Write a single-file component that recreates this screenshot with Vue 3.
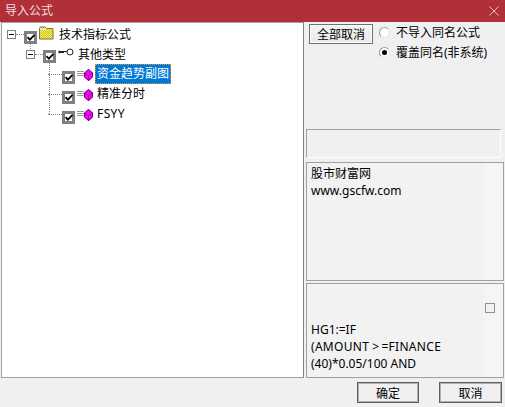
<script setup>
const rows = [
  { id: 'r1', level: 0, expand: true, icon: 'folder', label: '技术指标公式' },
  { id: 'r2', level: 1, expand: true, icon: 'key', label: '其他类型' },
  { id: 'r3', level: 2, icon: 'gem', label: '资金趋势副图', selected: true },
  { id: 'r4', level: 2, icon: 'gem', label: '精准分时' },
  { id: 'r5', level: 2, icon: 'gem', label: 'FSYY' }
]
</script>

<template>
  <div class="win">
    <header class="title">
      <span>导入公式</span>
      <svg class="close" width="10" height="10" viewBox="0 0 10 10"><path d="M.5.5l9 9M9.5.5l-9 9" stroke="#e8c4c6" stroke-width="1" fill="none"/></svg>
    </header>
    <main class="body">
      <section class="tree">
        <div v-for="r in rows" :key="r.id" class="row" :class="['lv' + r.level, r.id]">
          <span v-if="r.expand" class="exp"><i></i></span>
          <span v-if="r.expand" class="hdots"></span>
          <span v-else class="hdots long"></span>
          <span class="cb">
            <svg width="8" height="7" viewBox="0 0 8 7"><path d="M.5 3.200 2.900 5.700 7.500 .8" stroke="#000" stroke-width="1.700" fill="none"/></svg>
          </span>
          <svg v-if="r.icon === 'folder'" class="ic fold" width="16" height="14" viewBox="0 0 16 14">
            <defs>
              <pattern id="dith" width="2" height="2" patternUnits="userSpaceOnUse">
                <rect width="2" height="2" fill="#fff24a"/>
                <rect width="1" height="1" fill="#c9bd3c"/>
                <rect x="1" y="1" width="1" height="1" fill="#c9bd3c"/>
              </pattern>
            </defs>
            <path d="M1.500 13V2.500l1-1.500h4.500l1.500 1.500h6.500V13z" fill="url(#dith)" stroke="#77733f"/>
            <path d="M2 3h6" stroke="#fff" fill="none"/>
          </svg>
          <svg v-else-if="r.icon === 'key'" class="ic key" width="16" height="8" viewBox="0 0 16 8">
            <circle cx="12" cy="4" r="3" fill="#fff" stroke="#222"/>
            <path d="M9 3.500H1M1 4.500h5" stroke="#222" fill="none"/>
            <path d="M1 2.500v3" stroke="#222" fill="none"/>
          </svg>
          <template v-else>
            <svg class="ic lines" width="7" height="6" viewBox="0 0 7 6"><path d="M0 .5h7M0 2.500h7M0 4.500h7" stroke="#9a9a9a"/></svg>
            <svg class="ic gem" width="9" height="12" viewBox="0 0 9 12">
              <path d="M4.500 0 9 4v4l-4.500 4L0 8V4z" fill="#ff00ff"/>
              <path d="M0 4 4.500 6.500 9 4M4.500 6.500V12" stroke="#7a0a7a" stroke-width=".7" fill="none"/>
              <path d="M4.500 .4 8.600 4v4l-4.100 3.600L.4 8V4z" stroke="#300a40" stroke-width=".8" fill="none"/>
            </svg>
          </template>
          <span class="label" :class="{ sel: r.selected, latin: r.id === 'r5' }">{{ r.label }}</span>
        </div>
      </section>
      <aside class="side">
        <div class="opts">
          <button class="btn all">全部取消</button>
          <div class="radios">
            <label class="radio"><i></i>不导入同名公式</label>
            <label class="radio on"><i></i>覆盖同名(非系统)</label>
          </div>
        </div>
        <div class="group"></div>
        <div class="box one">
          <p>股市财富网</p>
          <p>www.gscfw.com</p>
        </div>
        <div class="box two">
          <span class="mini"></span>
          <p>HG1:=IF</p>
          <p class="wide">(AMOUNT<span class="op">&gt;</span>=FINANCE</p>
          <p>(40)*0.05/100 AND</p>
        </div>
      </aside>
    </main>
    <footer class="foot">
      <button class="btn act">确定</button>
      <button class="btn act">取消</button>
    </footer>
  </div>
</template>

<style>
html, body { margin: 0; background: #f0f0f0; }
</style>

<style scoped>
.win {
  width: 505px;
  height: 407px;
  display: flex;
  flex-direction: column;
  background: #f0f0f0;
  color: #000;
  font: 12px "Noto Sans", "Noto Sans CJK SC", sans-serif;
  overflow: hidden;
}
.title {
  height: 22px;
  flex: none;
  display: flex;
  align-items: center;
  justify-content: space-between;
  padding: 0 6px 2px 5px;
  box-sizing: border-box;
  background: #b12f36;
  color: #f3dfe0;
}
.close { margin-top: 2px; }
.body {
  flex: none;
  height: 356px;
  display: grid;
  grid-template-columns: 303px 1fr;
  padding-left: 1px;
}
.tree {
  position: relative;
  background: #fff;
  border: 1px solid #a0a0a0;
  border-right-color: #808080;
  padding-top: 1px;
  box-sizing: border-box;
}
.row {
  position: relative;
  height: 20px;
  display: flex;
  align-items: center;
}
.lv0 { padding-left: 5px; }
.lv1 { padding-left: 24px; }
.lv2 { padding-left: 46px; }
.exp {
  width: 9px;
  height: 9px;
  box-sizing: border-box;
  border: 1px solid #808080;
  background: #fff;
  display: flex;
  align-items: center;
  justify-content: center;
}
.exp i { width: 5px; height: 1px; background: #000; }
.hdots {
  width: 8px;
  height: 0;
  border-top: 1px dotted #808080;
}
.hdots.long { width: 14px; }
.cb {
  width: 13px;
  height: 13px;
  box-sizing: border-box;
  border: 3px solid #808080;
  background: #fff;
  display: flex;
  align-items: center;
  justify-content: center;
  transform: translateY(3px);
  flex: none;
}
.cb svg { flex: none; margin: 0 -1px; position: relative; }
.lv1 .cb { transform: translateY(2px); }
.ic { flex: none; }
.fold { margin-left: 1px; transform: translateY(-1px); }
.key { margin-left: 2px; transform: translateY(-2px); }
.lines { margin-left: 2px; }
.gem { transform: translateY(1px); }
.label { margin-left: 5px; white-space: nowrap; }
.lv1 .label { margin-left: 4px; }
.lv2 .label {
  margin-left: 2px;
  padding-left: 2px;
  line-height: 20px;
  height: 20px;
  box-sizing: border-box;
}
.lv2 .label.sel {
  background: #0078d7;
  color: #fff;
  outline: 1px dotted #e8902a;
  outline-offset: -1px;
  padding: 0 2px;
}
.latin { letter-spacing: .4px; }
.r2::before {
  content: "";
  position: absolute;
  left: 28px;
  top: -1px;
  height: 6px;
  border-left: 1px dotted #808080;
}
.r3::before, .r4::before, .r5::before {
  content: "";
  position: absolute;
  left: 47px;
  top: -1px;
  height: 11px;
  border-left: 1px dotted #808080;
}
.r3::after, .r4::after {
  content: "";
  position: absolute;
  left: 47px;
  top: 10px;
  height: 10px;
  border-left: 1px dotted #808080;
}
.side {
  display: flex;
  flex-direction: column;
  padding-left: 1px;
  min-width: 0;
}
.opts {
  height: 107px;
  flex: none;
  display: flex;
  gap: 6px;
  padding: 2px 0 0 4px;
  box-sizing: border-box;
}
.btn {
  font: inherit;
  color: #000;
  padding: 0;
  background: #f1f1f1;
  border: 1px solid #707070;
  box-shadow: inset 0 0 0 1px #fff;
}
.all {
  width: 64px;
  height: 20px;
  background: linear-gradient(#f4f4f4, #e8e8e8);
}
.radios { display: flex; flex-direction: column; }
.radio {
  height: 20px;
  display: flex;
  align-items: center;
  gap: 6px;
  position: relative;
  top: -2px;
}
.radio i {
  width: 11px;
  height: 11px;
  box-sizing: border-box;
  border-radius: 50%;
  background: #fff;
  border: 1px solid #9a9a9a;
  border-right-color: #e4e4e4;
  border-bottom-color: #e4e4e4;
  position: relative;
}
.on i::after {
  content: "";
  position: absolute;
  left: 2px;
  top: 2px;
  width: 5px;
  height: 5px;
  border-radius: 50%;
  background: #000;
}
.group {
  flex: none;
  height: 29px;
  width: 195px;
  margin-left: 1px;
  box-sizing: border-box;
  border: 1px solid #a0a0a0;
  border-right-color: #fff;
  border-bottom-color: #fff;
}
.box {
  flex: none;
  position: relative;
  width: 198px;
  margin-left: 1px;
  box-sizing: border-box;
  border: 1px solid #a0a0a0;
  background: linear-gradient(to right, #f2f2f2 177px, #f6f5f3 177px);
  padding-left: 4px;
}
.box p { margin: 0; line-height: 17px; white-space: nowrap; }
.one { margin-top: 4px; height: 119px; padding-top: 2px; }
.two { margin-top: 2px; height: 95px; padding-top: 37px; }
.wide { letter-spacing: .3px; }
.op { margin: 0 2px 0 3px; }
.mini {
  position: absolute;
  left: 178px;
  top: 19px;
  width: 10px;
  height: 10px;
  box-sizing: border-box;
  border: 1px solid #909090;
  background: #f2f2f2;
}
.foot {
  flex: 1;
  display: flex;
  justify-content: flex-end;
  align-items: flex-start;
  gap: 20px;
  padding: 4px 3px 0 0;
  box-sizing: border-box;
}
.act {
  width: 62px;
  height: 21px;
  border: 1px solid #606060;
  box-shadow: inset 0 0 0 1px #b0b0b0;
  background: #f0f0f0;
}
.act + .act { width: 63px; }
</style>
